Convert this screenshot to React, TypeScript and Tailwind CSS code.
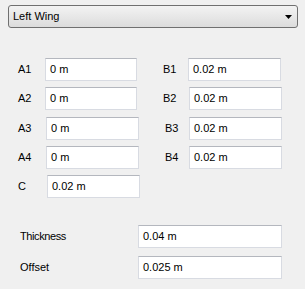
const FONT = "font-['Liberation_Sans',Arial,sans-serif]";

function Field({ value, className = "" }: { value: string; className?: string }) {
  return (
    <div
      className={`flex h-[23px] items-center border border-[#d8dbe2] border-t-[#b4b7be] bg-white pl-[4px] text-[11px] text-black ${className}`}
    >
      {value}
    </div>
  );
}

function Pair({ label, value, labelW, fieldCls }: { label: string; value: string; labelW: string; fieldCls: string }) {
  return (
    <div className="flex items-center">
      <span className={`${labelW} text-[11px] text-black`}>{label}</span>
      <Field value={value} className={fieldCls} />
    </div>
  );
}

const ROWS = [
  { a: "A1", av: "0 m", b: "B1", bv: "0.02 m", mt: "mt-[30px]", ax: "w-[92px]", aw: "w-[27px]", bw: "w-[25px]" },
  { a: "A2", av: "0 m", b: "B2", bv: "0.02 m", mt: "mt-[6px]", ax: "w-[92px]", aw: "w-[27px]", bw: "w-[26px]" },
  { a: "A3", av: "0 m", b: "B3", bv: "0.02 m", mt: "mt-[7px]", ax: "w-[93px]", aw: "w-[28px]", bw: "w-[24px]" },
  { a: "A4", av: "0 m", b: "B4", bv: "0.02 m", mt: "mt-[6px]", ax: "w-[93px]", aw: "w-[28px]", bw: "w-[24px]" },
];

export default function App() {
  return (
    <div className={`flex h-[289px] w-[305px] flex-col bg-[#f0f0f0] ${FONT}`}>
      <div className="mx-[8px] mt-[5px] flex h-[23px] w-[290px] items-center justify-between rounded-[3px] border border-[#707070] bg-gradient-to-b from-[#f3f3f3] to-[#dcdcdc] pl-[4px] pr-[4px] text-[11px] text-black">
        <span>Left Wing</span>
        <svg width="7" height="4" viewBox="0 0 7 4" className="mr-[1px]">
          <path d="M0 0H7L3.5 4Z" fill="#000" />
        </svg>
      </div>

      {ROWS.map((r) => (
        <div key={r.a} className={`flex items-center pl-[18px] ${r.mt}`}>
          <Pair label={r.a} value={r.av} labelW={r.aw} fieldCls={r.ax} />
          <div className="ml-[26px]">
            <Pair label={r.b} value={r.bv} labelW={r.bw} fieldCls="w-[93px]" />
          </div>
        </div>
      ))}

      <div className="mt-[6px] flex items-center pl-[18px]">
        <Pair label="C" value="0.02 m" labelW="w-[29px]" fieldCls="w-[93px]" />
      </div>

      <div className="mt-[27px] flex items-center pl-[20px]">
        <span className="w-[118px] text-[11px] tracking-[-0.4px] text-black">Thickness</span>
        <Field value="0.04 m" className="w-[144px]" />
      </div>
      <div className="mt-[8px] flex items-center pl-[20px]">
        <span className="w-[118px] text-[11px] text-black">Offset</span>
        <Field value="0.025 m" className="w-[144px]" />
      </div>
    </div>
  );
}
